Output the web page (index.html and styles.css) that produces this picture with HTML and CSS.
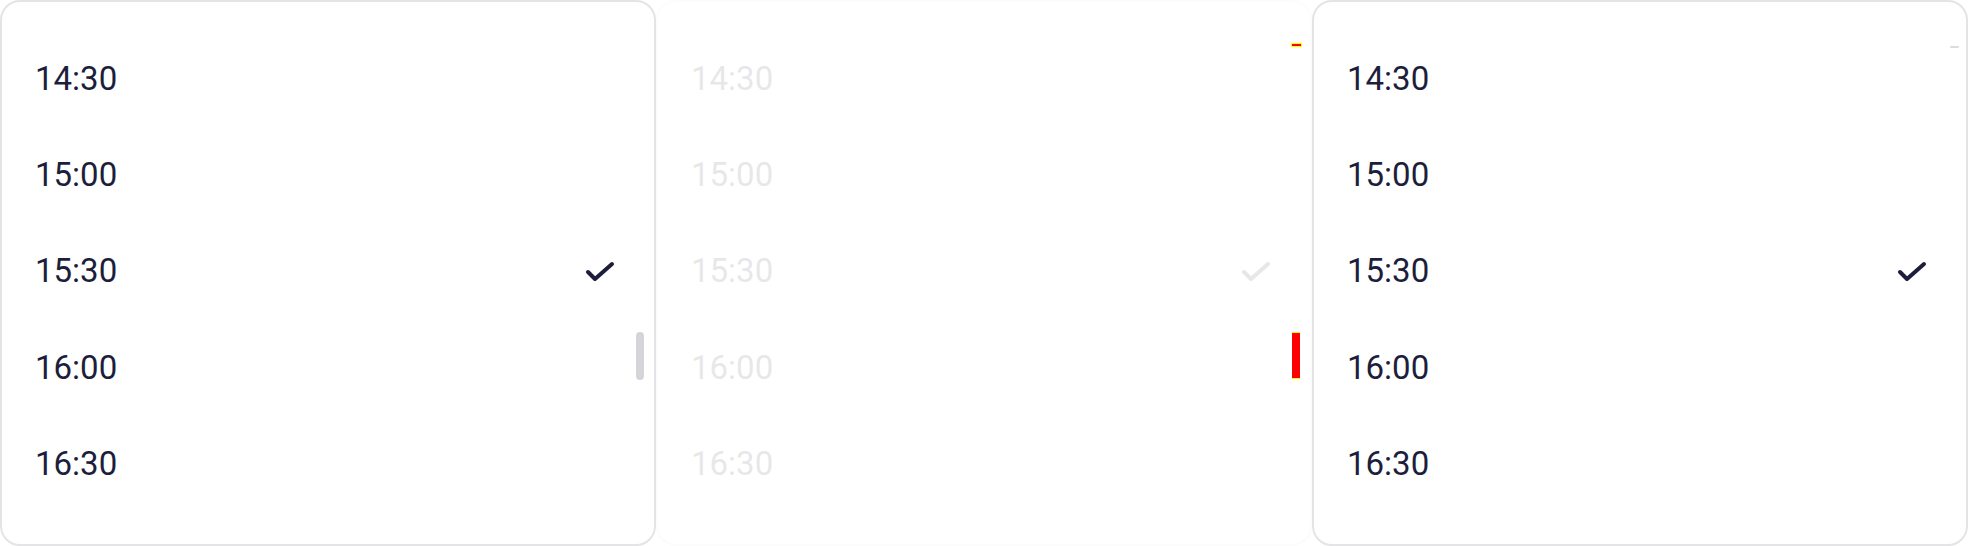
FILE: index.html
```html
<!DOCTYPE html>
<html>
<head>
<meta charset="utf-8">
<link rel="stylesheet" href="styles.css">
</head>
<body>
<div class="stage">
  <div class="panel">
    <div class="list">
      <div class="row"><span class="time">14:30</span></div>
      <div class="row"><span class="time">15:00</span></div>
      <div class="row"><span class="time">15:30</span><svg class="check" viewBox="0 0 32 24"><polyline points="4,13 11,20 28,5"/></svg></div>
      <div class="row"><span class="time">16:00</span></div>
      <div class="row"><span class="time">16:30</span></div>
    </div>
    <div class="thumb"></div>
  </div>
  <div class="panel-wrap">
    <div class="panel faded">
      <div class="list">
        <div class="row"><span class="time">14:30</span></div>
        <div class="row"><span class="time">15:00</span></div>
        <div class="row"><span class="time">15:30</span><svg class="check" viewBox="0 0 32 24"><polyline points="4,13 11,20 28,5"/></svg></div>
        <div class="row"><span class="time">16:00</span></div>
        <div class="row"><span class="time">16:30</span></div>
      </div>
    </div>
    <div class="mark-dash red"></div>
    <div class="mark-bar"></div>
  </div>
  <div class="panel">
    <div class="list">
      <div class="row"><span class="time">14:30</span></div>
      <div class="row"><span class="time">15:00</span></div>
      <div class="row"><span class="time">15:30</span><svg class="check" viewBox="0 0 32 24"><polyline points="4,13 11,20 28,5"/></svg></div>
      <div class="row"><span class="time">16:00</span></div>
      <div class="row"><span class="time">16:30</span></div>
    </div>
    <div class="mark-dash gray"></div>
  </div>
</div>
</body>
</html>
```
FILE: styles.css
```css
html, body {
  margin: 0;
  padding: 0;
  background: #ffffff;
}
.stage {
  display: flex;
  width: 1968px;
  height: 546px;
}
.panel-wrap {
  position: relative;
  width: 656px;
  height: 546px;
}
.panel {
  position: relative;
  box-sizing: border-box;
  width: 656px;
  height: 546px;
  border: 2px solid #e4e4e7;
  border-radius: 20px;
  background: #ffffff;
  overflow: hidden;
}
.faded {
  opacity: 0.1;
}
.list {
  display: flex;
  flex-direction: column;
  padding-top: 28px;
}
.row {
  display: flex;
  align-items: center;
  justify-content: space-between;
  height: 96.4px;
  padding-left: 33px;
  padding-right: 38px;
}
.time {
  font-family: Roboto, "Liberation Sans", sans-serif;
  font-size: 33px;
  letter-spacing: 0;
  color: #1c1e3b;
  line-height: 1;
}
.check {
  width: 32px;
  height: 24px;
}
.check polyline {
  fill: none;
  stroke: #1c1e3b;
  stroke-width: 4;
  stroke-linecap: round;
  stroke-linejoin: round;
}
.thumb {
  position: absolute;
  right: 10px;
  top: 330px;
  width: 8px;
  height: 48px;
  border-radius: 4px;
  background: #d4d4d9;
}
.mark-dash {
  position: absolute;
  left: 636px;
  top: 44px;
  width: 9px;
  height: 2px;
}
.mark-dash.red {
  background: #ff0000;
  box-shadow: 0 0 0 1px #ffff00;
}
.mark-dash.gray {
  background: #dcdcdc;
  border-radius: 1px;
}
.mark-bar {
  position: absolute;
  left: 636px;
  top: 332px;
  width: 8px;
  height: 47px;
  box-sizing: border-box;
  background: #ff0000;
  border-top: 1px solid #ffff00;
  border-bottom: 1px solid #ffff00;
  border-radius: 1px;
}
```
